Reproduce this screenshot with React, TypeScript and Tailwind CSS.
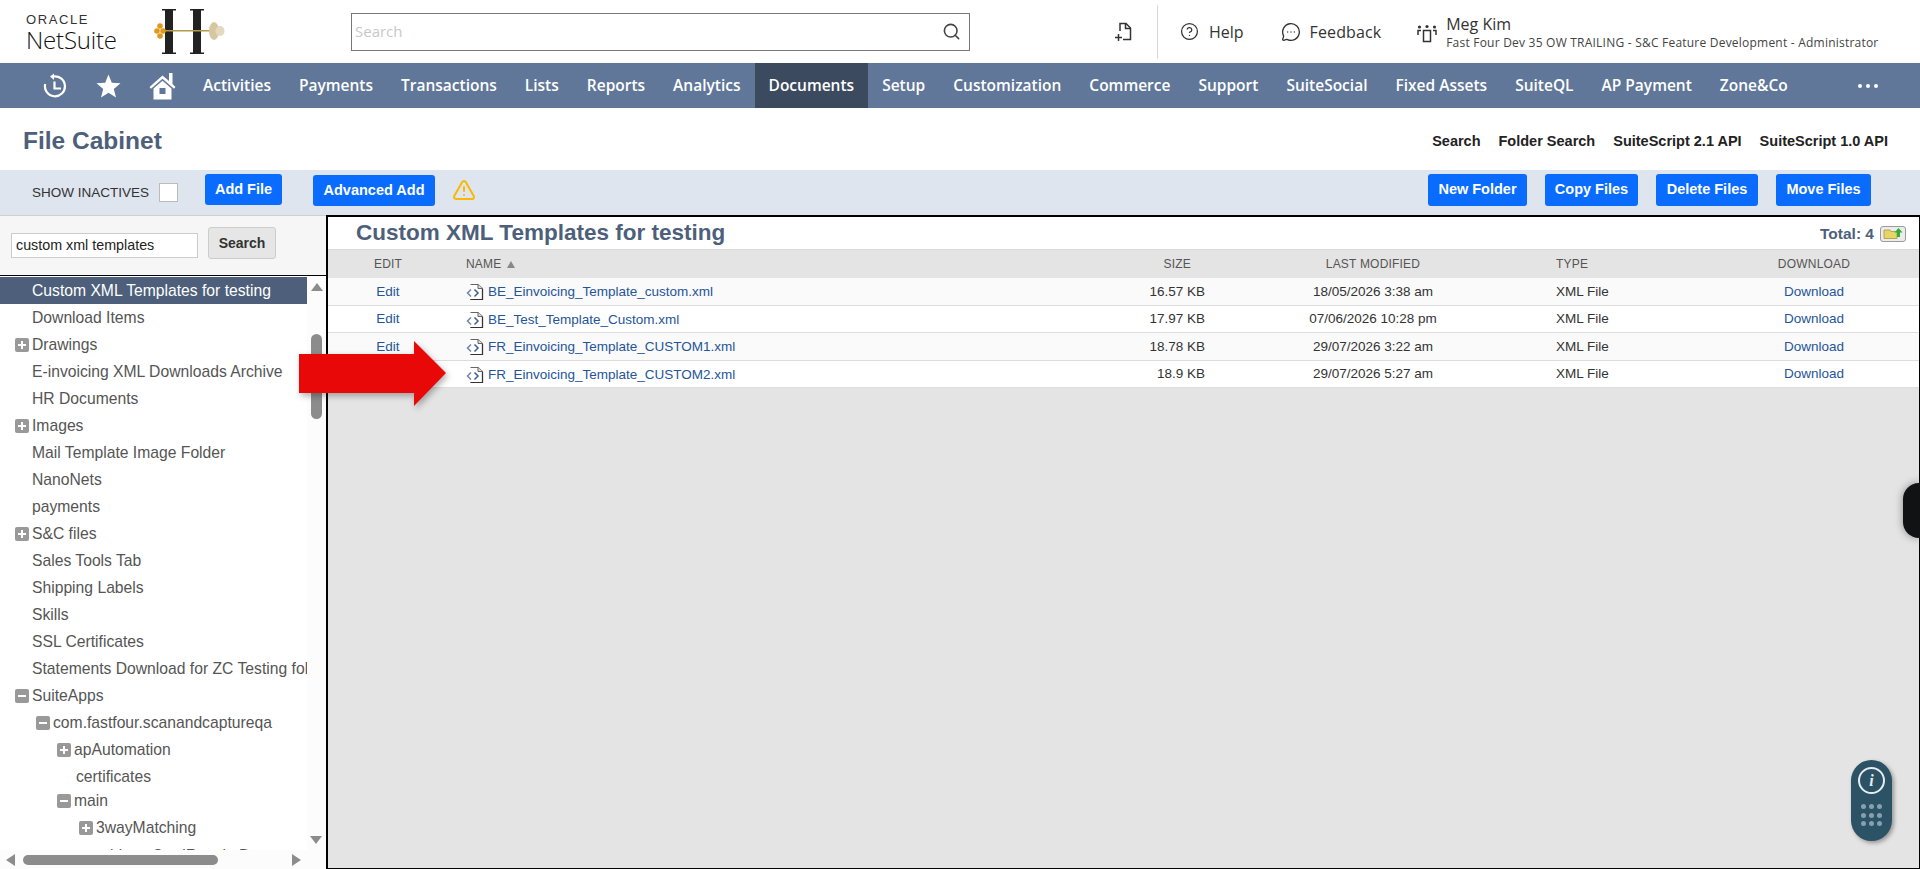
import { CircleHelp, MessageCircleMore, Search, TriangleAlert } from "lucide-react"

const navItems = ["Activities", "Payments", "Transactions", "Lists", "Reports", "Analytics", "Documents", "Setup", "Customization", "Commerce", "Support", "SuiteSocial", "Fixed Assets", "SuiteQL", "AP Payment", "Zone&Co"]

const tree = [
  { label: "Custom XML Templates for testing", text: "pl-[32px]", selected: true },
  { label: "Download Items", text: "pl-[32px]" },
  { label: "Drawings", icon: "plus", box: "ml-[15px]" },
  { label: "E-invoicing XML Downloads Archive", text: "pl-[32px]" },
  { label: "HR Documents", text: "pl-[32px]" },
  { label: "Images", icon: "plus", box: "ml-[15px]" },
  { label: "Mail Template Image Folder", text: "pl-[32px]" },
  { label: "NanoNets", text: "pl-[32px]" },
  { label: "payments", text: "pl-[32px]" },
  { label: "S&C files", icon: "plus", box: "ml-[15px]" },
  { label: "Sales Tools Tab", text: "pl-[32px]" },
  { label: "Shipping Labels", text: "pl-[32px]" },
  { label: "Skills", text: "pl-[32px]" },
  { label: "SSL Certificates", text: "pl-[32px]" },
  { label: "Statements Download for ZC Testing folder", text: "pl-[32px]" },
  { label: "SuiteApps", icon: "minus", box: "ml-[15px]" },
  { label: "com.fastfour.scanandcaptureqa", icon: "minus", box: "ml-[36px]" },
  { label: "apAutomation", icon: "plus", box: "ml-[57px]" },
  { label: "certificates", text: "pl-[76px]" },
  { label: "main", icon: "minus", box: "ml-[57px]", row: "-mt-[3px]" },
  { label: "3wayMatching", icon: "plus", box: "ml-[79px]" },
  { label: "addressCardReceiptDocumentation", text: "pl-[96px]", row: "mt-[1px]" },
]

const files = [
  { name: "BE_Einvoicing_Template_custom.xml", size: "16.57 KB", date: "18/05/2026 3:38 am", bg: "bg-[#fafafa]" },
  { name: "BE_Test_Template_Custom.xml", size: "17.97 KB", date: "07/06/2026 10:28 pm", bg: "bg-white" },
  { name: "FR_Einvoicing_Template_CUSTOM1.xml", size: "18.78 KB", date: "29/07/2026 3:22 am", bg: "bg-[#fafafa]" },
  { name: "FR_Einvoicing_Template_CUSTOM2.xml", size: "18.9 KB", date: "29/07/2026 5:27 am", bg: "bg-white" },
]

const tableCols = "grid grid-cols-[120px_652px_105px_336px_179px_188px_1fr]"

function BlueButton({ label, className }: { label: string; className: string }) {
  return (
    <button className={`flex items-center justify-center rounded-[3px] bg-[#0a6cff] text-[14.5px] font-bold text-white ${className}`}>
      {label}
    </button>
  )
}

function TreeToggle({ kind }: { kind: string }) {
  return (
    <span className="relative mr-[3px] flex h-[14px] w-[14px] shrink-0 items-center justify-center rounded-[2px] bg-[#999999]">
      <span className="h-[2px] w-[8px] bg-white" />
      {kind === "plus" && <span className="absolute h-[8px] w-[2px] bg-white" />}
    </span>
  )
}

function XmlIcon() {
  return (
    <svg width="18" height="18" viewBox="0 0 18 18" className="shrink-0">
      <path d="M4.5 1.5H12L16.5 5.5V16.5H4.5" fill="#fff" stroke="#666" strokeWidth="1.1" />
      <path d="M12 1.5V5.5H16.5" fill="#ddd" stroke="#666" strokeWidth="1" />
      <path d="M4.5 16.5H16.5V6" fill="none" stroke="#333" strokeWidth="1.2" />
      <path d="M5 6.5L1.5 10L5 13.5" fill="none" stroke="#6b86ad" strokeWidth="1.5" />
      <path d="M8.5 6.5L12 10L8.5 13.5" fill="none" stroke="#3f5f8f" strokeWidth="1.5" />
    </svg>
  )
}

export default function App() {
  return (
    <div className="relative flex h-[869px] w-[1920px] flex-col overflow-hidden bg-white font-['Liberation_Sans',Arial,sans-serif]">
      {/* top bar */}
      <div className="flex h-[63px] shrink-0 items-center font-['Open_Sans',sans-serif] text-[#333]">
        <div className="ml-[26px] mt-[3px] flex w-[93px] flex-col">
          <span className="h-[13px] text-[13px] leading-[13px] tracking-[1.6px] text-[#333] font-['Liberation_Sans',sans-serif]">ORACLE</span>
          <span className="h-[27px] text-[24px] font-light leading-[27px] tracking-[-0.2px] text-[#111]">NetSuite</span>
        </div>
        <svg width="71" height="45" viewBox="0 0 71 45" className="ml-[35px] shrink-0">
          <rect x="11" y="0" width="8" height="45" fill="#222" />
          <rect x="8" y="0" width="14" height="1.5" fill="#222" />
          <rect x="8" y="43.5" width="14" height="1.5" fill="#222" />
          <rect x="39" y="0" width="8" height="45" fill="#222" />
          <rect x="36" y="0" width="14" height="1.5" fill="#222" />
          <rect x="36" y="43.5" width="14" height="1.5" fill="#222" />
          <rect x="10" y="21" width="46" height="1.5" fill="#b59a4e" />
          <circle cx="6" cy="17" r="2.8" fill="#e0991c" />
          <circle cx="3" cy="22" r="2.8" fill="#e0991c" />
          <circle cx="9" cy="22" r="2.8" fill="#e0991c" />
          <circle cx="6" cy="27" r="2.8" fill="#e0991c" />
          <ellipse cx="60" cy="22" rx="5" ry="9" fill="#d6c7a0" />
          <ellipse cx="66" cy="22" rx="4.5" ry="5" fill="#e3d9bf" />
        </svg>
        <div className="ml-[126px] flex h-[38px] w-[619px] shrink-0 items-center justify-between border border-[#777] pl-[3px] pr-[8px]">
          <span className="text-[15px] text-[#c8c8c8]">Search</span>
          <Search className="h-[19px] w-[19px] text-[#444]" strokeWidth={2} />
        </div>
        <svg width="18" height="20" viewBox="0 0 18 20" fill="none" stroke="#333" strokeWidth="1.5" className="ml-[144px] shrink-0">
          <path d="M6 9V1.5H12L16.5 6V17.5H9" />
          <path d="M11.5 1.5V6.5H16.5" />
          <path d="M4.5 12V19M1 15.5H8" />
        </svg>
        <div className="ml-[25px] h-[54px] w-px shrink-0 bg-[#d8d8d8]" />
        <CircleHelp className="ml-[22px] h-[19px] w-[19px] shrink-0 text-[#333]" strokeWidth={1.6} />
        <span className="ml-[10px] text-[16px]">Help</span>
        <MessageCircleMore className="ml-[37px] h-[20px] w-[20px] shrink-0 text-[#333]" strokeWidth={1.6} />
        <span className="ml-[9px] text-[16px] tracking-[0.1px]">Feedback</span>
        <svg width="20" height="22" viewBox="0 0 20 22" fill="none" stroke="#333" strokeWidth="1.5" className="ml-[36px] shrink-0">
          <rect x="6.5" y="9.5" width="7" height="11" />
          <circle cx="10" cy="5.5" r="1.6" fill="#333" stroke="none" />
          <circle cx="2.5" cy="6" r="1.6" fill="#333" stroke="none" />
          <circle cx="17.5" cy="6" r="1.6" fill="#333" stroke="none" />
          <path d="M1 14V9.5H4M19 14V9.5H16" />
        </svg>
        <div className="ml-[9px] flex flex-col">
          <span className="text-[16px] leading-[22px]">Meg Kim</span>
          <span className="text-[12px] leading-[16px] tracking-[0.22px] text-[#444]">Fast Four Dev 35 OW TRAILING - S&amp;C Feature Development - Administrator</span>
        </div>
      </div>

      {/* main nav */}
      <div className="flex h-[45px] shrink-0 items-center bg-[#607799] pl-[43px] font-['Open_Sans',sans-serif] text-white">
        <svg width="24" height="26" viewBox="0 0 24 26" fill="none" stroke="#fff" strokeWidth="2.2" className="shrink-0">
          <path d="M10 3.5A10 10 0 1 1 2.2 11" />
          <path d="M11 0.5L7 3.5L11 7" fill="#fff" stroke="none" />
          <path d="M11.5 8.5V15.5H18" />
        </svg>
        <svg width="25" height="24" viewBox="0 0 25 24" fill="#fff" className="ml-[29px] shrink-0">
          <path d="M12.5 0.5L15.8 8.8L24.5 9.3L17.8 15L20 23.5L12.5 18.8L5 23.5L7.2 15L0.5 9.3L9.2 8.8Z" />
        </svg>
        <svg width="27" height="28" viewBox="0 0 27 28" fill="#fff" className="ml-[28px] shrink-0">
          <path d="M0.5 15L13.5 3.5L20 9V1H23.5V12L26.5 15L25 16.8L13.5 6.7L2 16.8Z" />
          <path d="M4.5 16.5L13.5 8.7L22.5 16.5V27.5H4.5ZM10.5 16V22H16.5V16Z" fillRule="evenodd" />
        </svg>
        <div className="ml-[13px] flex h-full">
          {navItems.map((item) => (
            <div
              key={item}
              className={`flex h-full items-center px-[14px] text-[15.5px] font-semibold ${item === "Documents" ? "bg-[#3c4a60]" : ""}`}
            >
              {item}
            </div>
          ))}
        </div>
        <div className="ml-auto mr-[42px] flex gap-[4px]">
          <span className="h-[4px] w-[4px] rounded-full bg-white" />
          <span className="h-[4px] w-[4px] rounded-full bg-white" />
          <span className="h-[4px] w-[4px] rounded-full bg-white" />
        </div>
      </div>

      {/* page title */}
      <div className="flex h-[62px] shrink-0 items-center justify-between pl-[23px] pr-[32px] pt-[4px]">
        <h1 className="text-[24.5px] font-bold text-[#4d5f7a]">File Cabinet</h1>
        <div className="mt-[2px] flex gap-[18px] text-[14.5px] font-bold text-[#222]">
          <span>Search</span>
          <span>Folder Search</span>
          <span>SuiteScript 2.1 API</span>
          <span>SuiteScript 1.0 API</span>
        </div>
      </div>

      {/* toolbar */}
      <div className="flex h-[45px] shrink-0 items-start bg-[#dfe5ee] pt-[4px]">
        <span className="ml-[32px] mt-[9px] text-[13.5px] text-[#333]">SHOW INACTIVES</span>
        <span className="ml-[10px] mt-[9px] h-[19px] w-[19px] border border-[#bbb] bg-white" />
        <BlueButton label="Add File" className="ml-[27px] h-[31px] w-[77px]" />
        <BlueButton label="Advanced Add" className="ml-[31px] mt-[1px] h-[31px] w-[122px]" />
        <TriangleAlert className="ml-[17px] mt-[4px] h-[24px] w-[24px] text-[#fbb800]" strokeWidth={2} />
        <div className="ml-auto mr-[49px] flex gap-[18px]">
          <BlueButton label="New Folder" className="h-[32px] w-[99px]" />
          <BlueButton label="Copy Files" className="h-[32px] w-[93px]" />
          <BlueButton label="Delete Files" className="h-[32px] w-[102px]" />
          <BlueButton label="Move Files" className="h-[32px] w-[95px]" />
        </div>
      </div>

      <div className="flex min-h-0 flex-1">
        {/* folder tree */}
        <div className="flex w-[326px] shrink-0 flex-col border-t border-[#cfcfcf]">
          <div className="flex h-[60px] shrink-0 items-start border-b border-black bg-[#f6f6f6] pl-[11px] pt-[11px]">
            <div className="mt-[6px] flex h-[25px] w-[187px] items-center border border-[#ccc] bg-white pl-[4px] pt-[1px] text-[14.3px] text-[#222]">custom xml templates</div>
            <button className="ml-[10px] flex h-[32px] w-[68px] items-center justify-center rounded-[3px] border border-[#ccc] bg-[#e6e6e6] text-[14px] font-bold text-[#333]">Search</button>
          </div>
          <div className="flex min-h-0 flex-1">
            <div className="min-h-0 flex-1 overflow-hidden pt-[1px]">
              {tree.map((node) => (
                <div
                  key={node.label}
                  className={`flex h-[27px] items-center whitespace-nowrap text-[15.7px] ${node.selected ? "bg-[#4d5f7a] text-white" : "text-[#555]"} ${node.row ?? ""} ${node.text ?? ""}`}
                >
                  {node.icon && (
                    <span className={`flex items-center ${node.box}`}>
                      <TreeToggle kind={node.icon} />
                    </span>
                  )}
                  {node.label}
                </div>
              ))}
            </div>
            <div className="relative flex w-[19px] shrink-0 flex-col items-center bg-[#fcfcfc] pt-[7px]">
              <span className="h-0 w-0 border-x-[6px] border-b-[8px] border-x-transparent border-b-[#8c8c8c]" />
              <span className="mt-[43px] h-[85px] w-[11px] rounded-full bg-[#8c8c8c]" />
            </div>
          </div>
          <div className="relative flex h-[19px] shrink-0 items-center bg-[#fcfcfc] pl-[6px]">
            <span className="h-0 w-0 border-y-[6px] border-r-[9px] border-y-transparent border-r-[#8c8c8c]" />
            <span className="ml-[8px] h-[10px] w-[195px] rounded-full bg-[#8c8c8c]" />
            <span className="ml-[74px] h-0 w-0 border-y-[6px] border-l-[9px] border-y-transparent border-l-[#8c8c8c]" />
            <span className="absolute -top-[14px] left-[310px] h-0 w-0 border-x-[6px] border-t-[8px] border-x-transparent border-t-[#8c8c8c]" />
          </div>
        </div>

        {/* file list */}
        <div className="flex min-w-0 flex-1 flex-col border border-l-2 border-t-2 border-black bg-[#e4e4e4]">
          <div className="flex h-[32px] shrink-0 items-center justify-between bg-white pl-[28px] pr-[13px]">
            <h2 className="text-[22.5px] font-bold text-[#4d5f7a]">Custom XML Templates for testing</h2>
            <div className="flex items-center gap-[6px] pt-[1px]">
              <span className="text-[15.5px] font-bold text-[#4d5f7a]">Total: 4</span>
              <svg width="26" height="16" viewBox="0 0 26 16" className="shrink-0">
                <rect x="0.5" y="0.5" width="25" height="15" rx="2.5" fill="#ececec" stroke="#9a9a9a" />
                <path d="M4 4H10L11 5.5H17V12.5H4Z" fill="#e6d66a" stroke="#a8983f" strokeWidth="0.8" />
                <path d="M18.5 2L22.5 6.5H20V11H17V6.5H14.5Z" fill="#2fae3a" />
              </svg>
            </div>
          </div>
          <div className={`${tableCols} h-[29px] shrink-0 items-center border-t border-[#dadada] text-[12px] tracking-[0.2px] text-[#555]`}>
            <span className="text-center">EDIT</span>
            <span className="flex items-center gap-[6px] pl-[18px]">NAME <span className="h-0 w-0 border-x-[4px] border-b-[7px] border-x-transparent border-b-[#888]" /></span>
            <span className="pr-[14px] text-right">SIZE</span>
            <span className="text-center">LAST MODIFIED</span>
            <span className="pl-[15px]">TYPE</span>
            <span className="text-center">DOWNLOAD</span>
          </div>
          {files.map((file) => (
            <div key={file.name} className={`${tableCols} h-[27.5px] shrink-0 items-center border-b border-[#dddddd] pt-[1px] text-[13.5px] text-[#333] ${file.bg}`}>
              <a className="text-center text-[#255599]">Edit</a>
              <div className="flex items-center gap-[4px] pl-[18px] pt-[1px] text-[#255599]">
                <XmlIcon />
                <a>{file.name}</a>
              </div>
              <span className="text-right">{file.size}</span>
              <span className="text-center">{file.date}</span>
              <span className="pl-[15px]">XML File</span>
              <a className="text-center text-[#255599]">Download</a>
            </div>
          ))}
        </div>
      </div>

      {/* annotation arrow */}
      <svg width="152" height="70" viewBox="0 0 152 70" className="absolute left-[299px] top-[341px] drop-shadow-[2px_3px_3px_rgba(0,0,0,0.3)]">
        <path d="M0 13H115V0L147 32L115 65V52H0Z" fill="#e80808" />
      </svg>

      {/* floating widgets */}
      <div className="absolute right-0 top-[483px] h-[55px] w-[17px] rounded-l-[16px] bg-[#111214] shadow-[0_0_8px_rgba(0,0,0,0.4)]" />
      <div className="absolute left-[1851px] top-[760px] flex h-[81px] w-[41px] flex-col items-center rounded-full bg-[#2c5266] pt-[7px] shadow-[2px_2px_4px_rgba(0,0,0,0.35)]">
        <span className="flex h-[27px] w-[27px] items-center justify-center rounded-full border-2 border-[#e6ecef] font-['Liberation_Serif',serif] text-[16px] font-bold italic text-[#e6ecef]">i</span>
        <div className="mt-[10px] grid grid-cols-3 gap-x-[3px] gap-y-[3.5px]">
          {[1, 2, 3, 4, 5, 6, 7, 8, 9].map((dot) => (
            <span key={dot} className="h-[5px] w-[5px] rounded-full bg-[#87a0ae]" />
          ))}
        </div>
      </div>
    </div>
  )
}
